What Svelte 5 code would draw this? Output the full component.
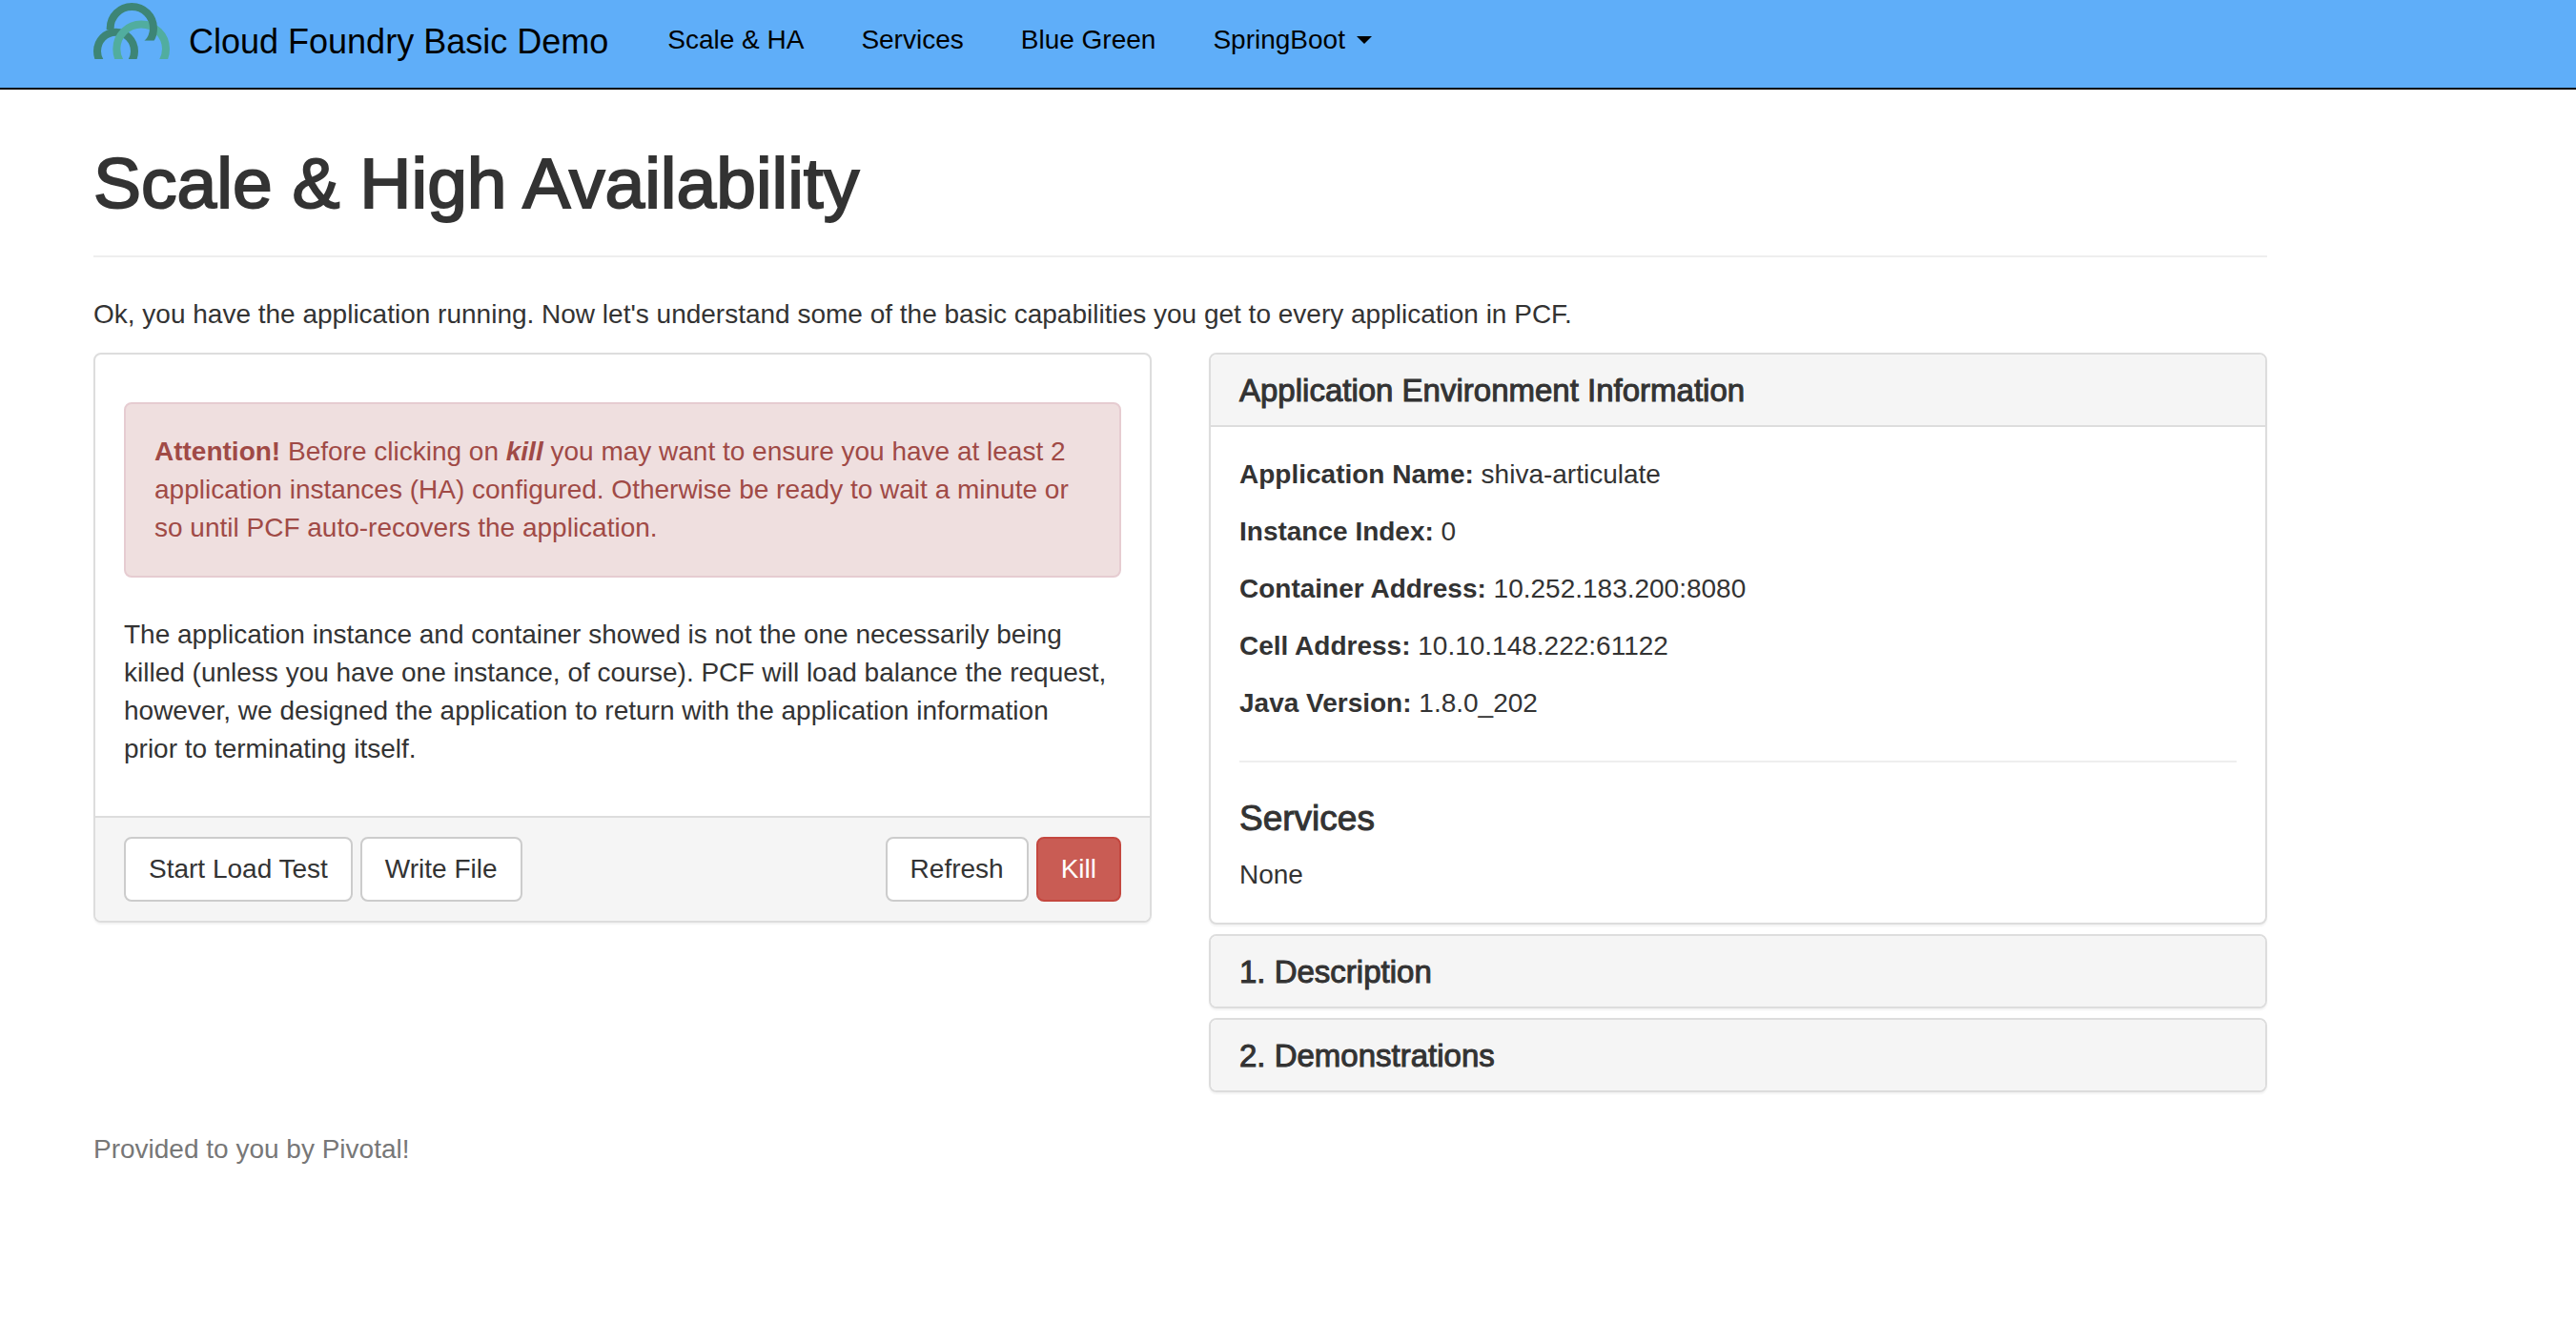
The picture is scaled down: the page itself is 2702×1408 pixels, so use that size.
<script>
  const links = ['Scale & HA', 'Services', 'Blue Green'];

  const details = [
    ['Application Name:', 'shiva-articulate'],
    ['Instance Index:', '0'],
    ['Container Address:', '10.252.183.200:8080'],
    ['Cell Address:', '10.10.148.222:61122'],
    ['Java Version:', '1.8.0_202'],
  ];

  const sections = ['1. Description', '2. Demonstrations'];
</script>

<header class="navbar">
  <nav class="container nav-row">
    <a class="brand" href="#home">
      <svg class="logo" viewBox="54 4 240 180" aria-hidden="true">
        <defs>
          <clipPath id="loop-end">
            <path d="M54 0H175V91H54Z M175 0H294V126H175Z" />
          </clipPath>
        </defs>
        <g fill="none" stroke-width="24">
          <ellipse cx="124.5" cy="159" rx="58.5" ry="60" stroke="#3d8576" />
          <circle cx="204.5" cy="152" r="77.5" stroke="#51ad9f" />
          <circle cx="175" cy="87" r="68" stroke="#3d8576" clip-path="url(#loop-end)" />
        </g>
      </svg>
      <span>Cloud Foundry Basic Demo</span>
    </a>
    <ul class="links">
      {#each links as link}
        <li><a href="#top">{link}</a></li>
      {/each}
      <li><button type="button" class="dropdown" aria-haspopup="true">SpringBoot<span class="caret"></span></button></li>
    </ul>
  </nav>
</header>

<main class="container">
  <h1>Scale &amp; High Availability</h1>
  <p>Ok, you have the application running. Now let's understand some of the basic capabilities you get to every application in PCF.</p>

  <div class="columns">
    <section class="panel">
      <div class="panel-body actions-body">
        <div class="alert" role="alert">
          <strong>Attention!</strong> Before clicking on <strong><em>kill</em></strong> you may want to ensure you have at least 2 application instances (HA) configured. Otherwise be ready to wait a minute or so until PCF auto-recovers the application.
        </div>
        <p>The application instance and container showed is not the one necessarily being killed (unless you have one instance, of course). PCF will load balance the request, however, we designed the application to return with the application information prior&nbsp;to terminating itself.</p>
      </div>
      <div class="panel-footer">
        <button type="button" class="btn">Start Load Test</button>
        <button type="button" class="btn">Write File</button>
        <button type="button" class="btn push">Refresh</button>
        <button type="button" class="btn danger">Kill</button>
      </div>
    </section>

    <div class="stack">
      <section class="panel">
        <h2 class="panel-heading divided">Application Environment Information</h2>
        <div class="panel-body">
          {#each details as [label, value]}
            <p><strong>{label}</strong> {value}</p>
          {/each}
          <hr />
          <h3>Services</h3>
          <div>None</div>
        </div>
      </section>
      {#each sections as title}
        <section class="panel">
          <h2 class="panel-heading"><button type="button" class="toggle" aria-expanded="false">{title}</button></h2>
        </section>
      {/each}
    </div>
  </div>

  <footer>Provided to you by Pivotal!</footer>
</main>

<style>
  :global(body) {
    background: #fff;
    color: #333;
    font: 28px/40px "Liberation Sans", Arial, sans-serif;
  }
  :global(*) {
    box-sizing: border-box;
  }
  .container {
    max-width: 2340px;
    margin-left: 68px;
    padding: 0 30px;
  }
  .navbar {
    background: #5faef9;
    border-bottom: 2px solid #080808;
  }
  .nav-row {
    display: flex;
    align-items: flex-start;
    gap: 62px;
    padding-top: 2px;
    padding-bottom: 28px;
  }
  .nav-row a,
  .dropdown {
    color: #000;
    text-decoration: none;
  }
  .brand {
    display: flex;
    align-items: flex-start;
    gap: 20px;
    font-size: 36px;
    white-space: nowrap;
  }
  .brand span {
    padding-top: 22px;
  }
  .logo {
    width: 80px;
    height: 60px;
  }
  .links {
    display: flex;
    gap: 60px;
    margin: 0;
    padding: 20px 0 0;
    list-style: none;
    white-space: nowrap;
  }
  button {
    font: inherit;
    cursor: pointer;
  }
  .dropdown,
  .toggle {
    display: flex;
    align-items: center;
    padding: 0;
    border: 0;
    background: none;
  }
  .caret {
    margin-left: 12px;
    border: 8px solid transparent;
    border-top-color: #000;
    border-bottom: 0;
  }
  h1,
  h2,
  h3,
  p {
    margin: 0;
    font-weight: 400;
  }
  h1 {
    padding: 58px 0 36px;
    margin-bottom: 40px;
    border-bottom: 2px solid #eee;
    font-size: 75px;
    line-height: 80px;
    -webkit-text-stroke: 2px #333;
  }
  p {
    margin-bottom: 20px;
  }
  .columns {
    display: grid;
    grid-template-columns: 1fr 1fr;
    align-items: start;
    gap: 60px;
  }
  .stack {
    display: grid;
    gap: 10px;
  }
  .panel {
    border: 2px solid #ddd;
    border-radius: 8px;
    background: #fff;
    box-shadow: 0 2px 2px rgba(0, 0, 0, 0.05);
    overflow: hidden;
  }
  .panel-body {
    padding: 30px;
  }
  .actions-body {
    padding-top: 50px;
  }
  .alert {
    margin-bottom: 40px;
    padding: 30px;
    border: 2px solid #e6ccd1;
    border-radius: 8px;
    background: #efdfdf;
    color: #a04a46;
  }
  .panel-footer {
    display: flex;
    gap: 8px;
    padding: 20px 30px;
    border-top: 2px solid #ddd;
    background: #f5f5f5;
  }
  .btn {
    padding: 12px 24px;
    border: 2px solid #ccc;
    border-radius: 8px;
    background: #fff;
    color: #333;
  }
  .push {
    margin-left: auto;
  }
  .danger {
    border-color: #c4473f;
    background: #c95c54;
    color: #fff;
  }
  .panel-heading {
    padding: 21px 30px 19px;
    background: #f5f5f5;
    font-size: 33px;
    line-height: 34px;
    -webkit-text-stroke: 1px #333;
  }
  .divided {
    border-bottom: 2px solid #ddd;
  }
  .toggle {
    width: 100%;
    color: #333;
  }
  hr {
    height: 2px;
    margin: 40px 0;
    border: 0;
    background: #eee;
  }
  h3 {
    margin-bottom: 20px;
    font-size: 37px;
    line-height: 38px;
    -webkit-text-stroke: 1px #333;
  }
  footer {
    padding: 40px 0;
    color: #777;
  }
</style>
